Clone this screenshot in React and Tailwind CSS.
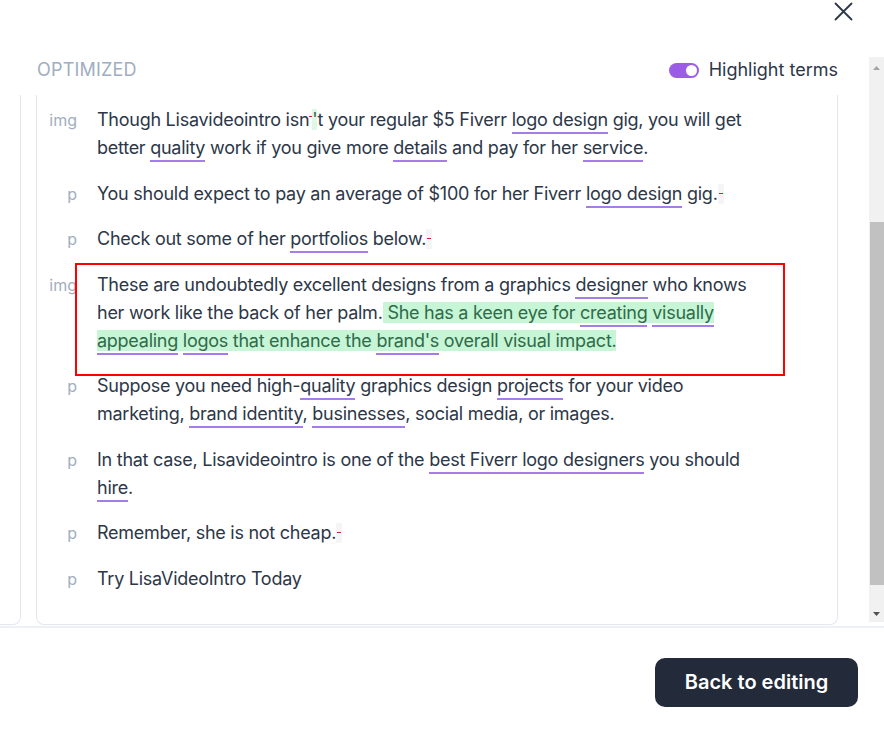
import React from "react";

const U = ({ children }) => (
  <span className="border-b-2 border-[#a47de8] pb-[2px]">{children}</span>
);

const Hl = ({ children }) => (
  <span className="bg-[#c6f6d5] text-[#2f6b4a]">{children}</span>
);

// little red diff marker left at the end of some paragraphs
const Mark = () => (
  <span className="relative inline-block h-[20px] w-[6px] bg-[#f4f5f7] align-[-4px]">
    <span className="absolute left-[1px] top-[9px] h-[1px] w-[4px] bg-[#d4202a]" />
  </span>
);

const Row = ({ tag, children, boxed }) => (
  <div className="flex gap-[20px]">
    <div className="w-[40px] shrink-0 text-right text-base leading-[28px] text-[#a0aec0]">
      {tag}
    </div>
    <div className="relative w-[668px] text-lg leading-[28px] tracking-[-0.26px] text-[#2d3748]">
      {children}
      {boxed && (
        <div className="pointer-events-none absolute -bottom-[21px] -left-[22px] -right-[20px] -top-[8px] border-2 border-[#ff0000]" />
      )}
    </div>
  </div>
);

const ScrollBar = () => (
  <div className="flex h-[565px] w-[15px] shrink-0 flex-col bg-[#f1f1f1]">
    <div className="flex h-[17px] items-center justify-center pt-[5px]">
      <svg width="7" height="4" viewBox="0 0 7 4">
        <polygon points="3.5,0 7,4 0,4" fill="#a3a3a3" />
      </svg>
    </div>
    <div className="h-[148px]" />
    <div className="ml-[1px] h-[363px] w-[14px] bg-[#c1c1c1]" />
    <div className="flex-1" />
    <div className="flex h-[17px] items-center justify-center">
      <svg width="7" height="4" viewBox="0 0 7 4">
        <polygon points="0,0 7,0 3.5,4" fill="#505050" />
      </svg>
    </div>
  </div>
);

export default function App() {
  return (
    <div className="flex h-[735px] w-[884px] flex-col overflow-hidden bg-white font-[Inter,sans-serif]">
      <div className="flex h-[57px] shrink-0 justify-end pr-[31px] pt-[2px]">
        <svg width="19" height="19" viewBox="0 0 19 19">
          <path d="M1.5 1.5 17.5 17.5 M17.5 1.5 1.5 17.5" stroke="#2d3748" strokeWidth="1.8" strokeLinecap="round" />
        </svg>
      </div>

      <div className="flex h-[569px] shrink-0">
        <div className="flex w-[869px] flex-col">
          <div className="flex h-[38px] items-center justify-between pb-[12px] pl-[37px] pr-[31px]">
            <span className="text-lg tracking-[0.2px] text-[#a0aec0]">OPTIMIZED</span>
            <div className="flex items-center gap-[10px]">
              <div className="flex h-[15px] w-[30px] items-center justify-end rounded-full bg-[#9b5de5] pr-[2px]">
                <div className="h-[11px] w-[11px] rounded-full bg-white" />
              </div>
              <span className="text-lg text-[#2d3748]">Highlight terms</span>
            </div>
          </div>

          <div className="flex flex-1">
            <div className="h-[530px] w-[21px] rounded-br-lg border-b border-r border-[#e2e8f0]" />
            <div className="ml-[15px] h-[530px] w-[802px] rounded-b-lg border-b border-l border-r border-[#e2e8f0] pb-[32px] pt-[11px]">
              <div className="flex flex-col gap-[17.5px]">
                <Row tag="img">
                  Though Lisavideointro isn
                  <span className="relative inline-block w-[3px]">
                    <span className="absolute left-0 -top-[10px] h-[1px] w-[3px] bg-[#d4202a]" />
                  </span>
                  <span className="bg-[#dff7e7] text-[#2f6b4a]">'</span>t your regular $5 Fiverr{" "}
                  <U>logo design</U> gig, you will get better <U>quality</U> work if you give more{" "}
                  <U>details</U> and pay for her <U>service</U>.
                </Row>
                <Row tag="p">
                  You should expect to pay an average of $100 for her Fiverr <U>logo design</U> gig.
                  <Mark />
                </Row>
                <Row tag="p">
                  Check out some of her <U>portfolios</U> below.
                  <Mark />
                </Row>
                <Row tag="img" boxed>
                  These are undoubtedly excellent designs from a graphics <U>designer</U> who knows
                  her work like the back of her palm.
                  <Hl>
                    {" "}She has a keen eye for <U>creating</U> <U>visually</U> <U>appealing</U>{" "}
                    <U>logos</U> that enhance the <U>brand's</U> overall visual impact.
                  </Hl>
                </Row>
                <Row tag="p">
                  Suppose you need high-<U>quality</U> graphics design <U>projects</U> for your video
                  marketing, <U>brand identity</U>, <U>businesses</U>, social media, or images.
                </Row>
                <Row tag="p">
                  In that case, Lisavideointro is one of the <U>best Fiverr logo designers</U> you
                  should <U>hire</U>.
                </Row>
                <Row tag="p">
                  Remember, she is not cheap.
                  <Mark />
                </Row>
                <Row tag="p">Try LisaVideoIntro Today</Row>
              </div>
            </div>
          </div>
        </div>
        <ScrollBar />
      </div>

      <div className="flex flex-1 items-center justify-end border-t-2 border-[#edf0f4] pb-[1px] pr-[26px]">
        <button className="mt-[2px] h-[49px] w-[203px] rounded-[10px] bg-[#232a39] text-[20px] font-semibold text-white">
          Back to editing
        </button>
      </div>
    </div>
  );
}
